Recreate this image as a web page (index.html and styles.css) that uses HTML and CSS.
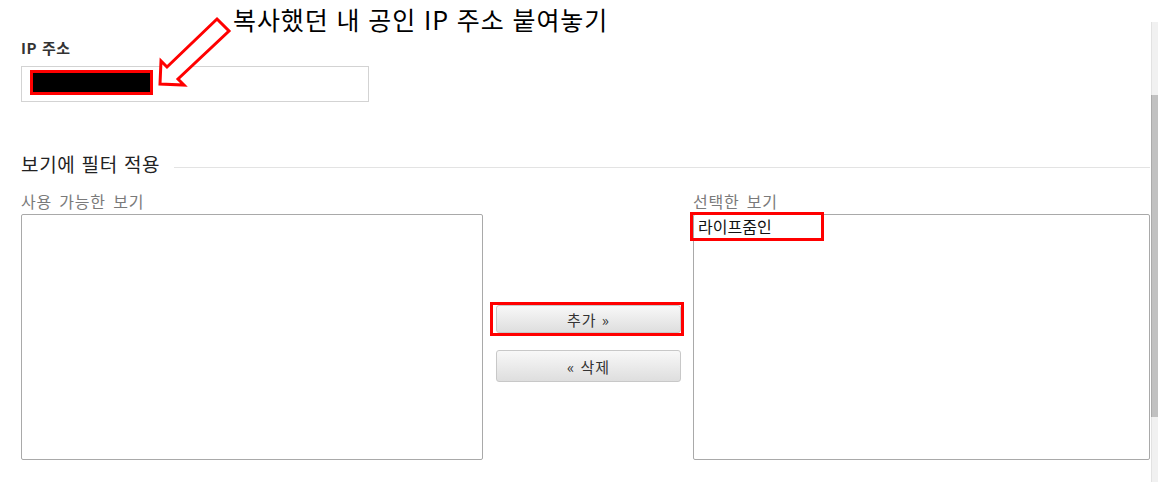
FILE: index.html
```html
<!DOCTYPE html>
<html lang="ko">
<head>
<meta charset="utf-8">
<title>IP 주소 필터</title>
<link rel="stylesheet" href="styles.css">
</head>
<body>
<div class="page">
  <main class="content">
    <section class="ip-field">
      <div class="field-label">IP 주소</div>
      <div class="ip-input"><span class="redacted"></span></div>
    </section>

    <section class="filter">
      <div class="legend-row">
        <h2 class="legend">보기에 필터 적용</h2>
        <span class="rule"></span>
      </div>
      <div class="picker">
        <div class="col col-left">
          <div class="col-label">사용 가능한 보기</div>
          <div class="listbox"></div>
        </div>
        <div class="buttons">
          <div class="hl-frame"><button class="btn">추가 »</button></div>
          <button class="btn btn-remove">« 삭제</button>
        </div>
        <div class="col col-right">
          <div class="col-label">선택한 보기</div>
          <div class="listbox">
            <div class="option">라이프줌인</div>
          </div>
        </div>
      </div>
    </section>
  </main>
  <div class="scrollbar"><div class="thumb"></div></div>

  <div class="annotation">
    <svg class="arrow" width="90" height="80" viewBox="150 12 90 80">
      <polygon points="217,19 229,31 178,79 184,85 160,84 161,61 167,67" fill="#fff" stroke="#f00" stroke-width="3" stroke-linejoin="miter"/>
    </svg>
    <div class="note">복사했던 내 공인 IP 주소 붙여놓기</div>
  </div>
</div>
</body>
</html>
```

FILE: styles.css
```css
html, body {
  margin: 0;
  padding: 0;
  background: #fff;
}
body {
  font-family: "Noto Sans CJK KR", "Liberation Sans", sans-serif;
  color: #333;
}
.page {
  position: relative;
  display: flex;
  width: 1158px;
  height: 482px;
  overflow: hidden;
}
.content {
  flex: 1 1 auto;
  padding: 38px 1px 0 21px;
}

/* IP field */
.field-label {
  font-size: 15px;
  line-height: 20px;
  font-weight: bold;
  letter-spacing: 0.6px;
  color: #333;
  margin-bottom: 8px;
}
.ip-input {
  box-sizing: border-box;
  width: 348px;
  height: 36px;
  border: 1px solid #d3d3d3;
  padding: 3px 0 0 8px;
}
.redacted {
  display: block;
  box-sizing: border-box;
  width: 123px;
  height: 25px;
  background: #000;
  border: 3px solid #f00;
}

/* filter section */
.filter {
  margin-top: 50px;
}
.legend-row {
  display: flex;
  align-items: center;
}
.legend {
  margin: 0;
  font-size: 19px;
  line-height: 24px;
  font-weight: normal;
  color: #222;
  letter-spacing: 0.7px;
}
.rule {
  flex: 1;
  height: 1px;
  background: #e3e3e3;
  margin: 6px 0 0 14px;
}
.picker {
  display: flex;
  margin-top: 15px;
}
.col-label {
  font-size: 16px;
  line-height: 20px;
  color: #7a7a7a;
  letter-spacing: 0.8px;
  word-spacing: 2px;
  margin-bottom: 3px;
}
.col-left {
  width: 462px;
}
.col-right {
  flex: 1;
}
.listbox {
  box-sizing: border-box;
  height: 246px;
  border: 1px solid #a9a9a9;
  border-radius: 2px;
  background: #fff;
}
.option {
  position: relative;
  padding-left: 4px;
  font-size: 16px;
  line-height: 22px;
  color: #111;
}
.option::after {
  content: "";
  position: absolute;
  left: -4px;
  top: -3px;
  width: 134px;
  height: 29px;
  box-sizing: border-box;
  border: 3px solid #f00;
}

/* buttons */
.buttons {
  width: 185px;
  padding: 111px 12px 0 13px;
  display: flex;
  flex-direction: column;
}
.hl-frame {
  border: 3px solid #f00;
  margin: 0 -3px 0 -6px;
  padding-left: 3px;
}
.btn {
  display: block;
  box-sizing: border-box;
  width: 185px;
  height: 28px;
  margin: 0;
  padding: 0;
  border: 1px solid #c8c8c8;
  border-radius: 3px;
  background: linear-gradient(#f8f8f8, #dedede);
  font-family: "Noto Sans CJK KR", "Liberation Sans", sans-serif;
  font-size: 15px;
  color: #333;
  letter-spacing: 1px;
}
.btn-remove {
  height: 32px;
  margin-top: 14px;
}

/* scrollbar */
.scrollbar {
  flex: 0 0 7px;
  margin-top: 22px;
  background: #f1f1f1;
  border-left: 1px solid #e2e2e2;
  box-sizing: border-box;
}
.thumb {
  margin-top: 73px;
  height: 322px;
  background: #c1c1c1;
  border-left: 1px solid #aaa;
  margin-left: -1px;
}

/* annotation overlay */
.annotation {
  position: absolute;
  left: 0;
  top: 0;
}
.arrow {
  position: absolute;
  left: 150px;
  top: 12px;
}
.note {
  position: absolute;
  left: 233px;
  top: 7px;
  white-space: nowrap;
  font-size: 25px;
  line-height: 25px;
  letter-spacing: 0.9px;
  color: #000;
}
```
